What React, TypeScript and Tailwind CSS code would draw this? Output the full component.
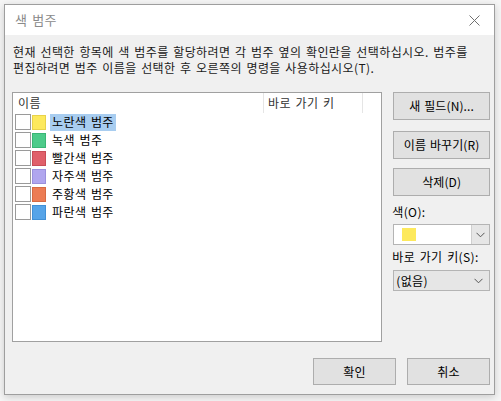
import React from "react";

const categories = [
  { name: "노란색 범주", color: "bg-[#fde95c]", border: "border-[#e8d24a]", selected: true },
  { name: "녹색 범주", color: "bg-[#4dcb8a]", border: "border-[#3bb575]" },
  { name: "빨간색 범주", color: "bg-[#e0606a]", border: "border-[#c94d57]" },
  { name: "자주색 범주", color: "bg-[#b0a6ee]", border: "border-[#9a90dc]" },
  { name: "주황색 범주", color: "bg-[#ec7c54]", border: "border-[#d66a43]" },
  { name: "파란색 범주", color: "bg-[#56a4e8]", border: "border-[#4190d6]" },
];

function Chevron() {
  return (
    <svg width="9" height="6" viewBox="0 0 9 6" fill="none">
      <polyline points="0.5,0.8 4.5,4.8 8.5,0.8" stroke="#555" strokeWidth="1" />
    </svg>
  );
}

function Button({ label, className = "" }: { label: string; className?: string }) {
  return (
    <div
      className={`flex items-center justify-center bg-[#e1e1e1] border border-[#adadad] text-[12px] text-black tracking-[0.1px] [word-spacing:1px] ${className}`}
    >
      {label}
    </div>
  );
}

export default function App() {
  return (
    <div
      className="w-[501px] h-[401px] bg-[#f6f6f6] pt-[4px] pl-[4px] overflow-hidden tracking-[0.4px] [word-spacing:1.5px]"
      style={{ fontFamily: "'Noto Sans CJK KR', 'Noto Sans', sans-serif" }}
    >
      <div className="w-[491px] h-[391px] border border-[#9e9e9e] bg-[#f0f0f0] flex flex-col shadow-[0_2px_8px_rgba(0,0,0,0.18)]">
        {/* Title bar */}
        <div className="h-[30px] bg-white flex items-center justify-between pl-[10px] pr-[10px]">
          <span className="text-[13px] text-[#8a8a8a]">색 범주</span>
          <svg width="11" height="11" viewBox="0 0 11 11" className="mr-[4px]">
            <path d="M0.5 0.5 L10.5 10.5 M10.5 0.5 L0.5 10.5" stroke="#707070" strokeWidth="1" />
          </svg>
        </div>

        {/* Body */}
        <div className="flex-1 flex flex-col pl-[7px] pr-[4px] pt-[9px] pb-[9px]">
          <p className="ml-[1px] text-[12px] leading-[16px] text-[#1a1a1a] whitespace-nowrap">
            현재 선택한 항목에 색 범주를 할당하려면 각 범주 옆의 확인란을 선택하십시오. 범주를
            <br />
            편집하려면 범주 이름을 선택한 후 오른쪽의 명령을 사용하십시오(T).
          </p>

          <div className="flex mt-[16px] gap-[11px]">
            {/* List */}
            <div className="w-[371px] h-[250px] border border-[#a0a0a0] bg-white flex flex-col">
              <div className="flex h-[20px] text-[12px] text-[#333]">
                <div className="w-[250px] pl-[5px] flex items-center">이름</div>
                <div className="w-[100px] border-l border-r border-[#e5e5e5] pl-[4px] flex items-center">
                  바로 가기 키
                </div>
              </div>
              <div className="flex flex-col">
                {categories.map((c) => (
                  <div key={c.name} className="h-[18px] flex items-center pl-[2px]">
                    <div className="w-[16px] h-[16px] border border-[#9a9a9a] bg-white" />
                    <div className={`ml-[1px] w-[14px] h-[15px] border ${c.color} ${c.border}`} />
                    <span
                      className={`ml-[4px] px-[2px] h-[17px] flex items-center text-[12px] text-black ${
                        c.selected ? "bg-[#a8cdf0]" : ""
                      }`}
                    >
                      {c.name}
                    </span>
                  </div>
                ))}
              </div>
            </div>

            {/* Right column */}
            <div className="w-[97px] flex flex-col">
              <Button label="새 필드(N)..." className="h-[28px]" />
              <Button label="이름 바꾸기(R)" className="h-[28px] mt-[11px]" />
              <Button label="삭제(D)" className="h-[28px] mt-[9px]" />
              <span className="mt-[8px] text-[12px] leading-[16px] text-black -ml-[1px]">색(O):</span>
              <div className="mt-[4px] h-[21px] border border-[#b4b4b4] bg-white flex items-center justify-between">
                <div className="ml-[8px] w-[14px] h-[13px] bg-[#fde95c]" />
                <div className="w-[18px] h-full bg-[#e6e6e6] border-l border-[#cfcfcf] flex items-center justify-center">
                  <Chevron />
                </div>
              </div>
              <span className="mt-[4px] text-[12px] leading-[16px] text-black -ml-[1px]">바로 가기 키(S):</span>
              <div className="mt-[5px] h-[21px] border border-[#b4b4b4] bg-[#e6e6e6] flex items-center justify-between pl-[2px] pr-[6px]">
                <span className="text-[12px] text-black">(없음)</span>
                <Chevron />
              </div>
            </div>
          </div>

          {/* Footer */}
          <div className="flex justify-end gap-[11px] mt-[16px]">
            <Button label="확인" className="w-[83px] h-[27px]" />
            <Button label="취소" className="w-[83px] h-[27px]" />
          </div>
        </div>
      </div>
    </div>
  );
}
